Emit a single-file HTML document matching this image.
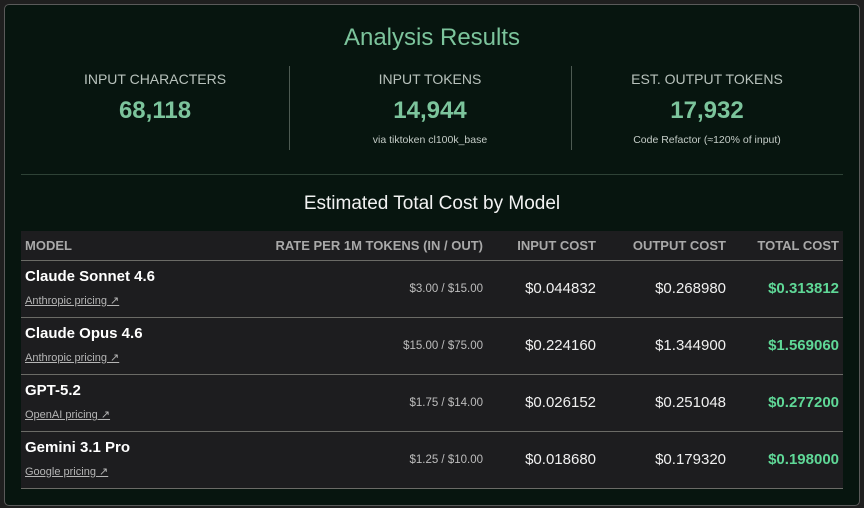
<!DOCTYPE html>
<html><head><style>
*{margin:0;padding:0;box-sizing:border-box}
body{width:864px;height:508px;background:#1f1f1f;font-family:"Liberation Sans",sans-serif;position:relative;overflow:hidden}
.card{position:absolute;left:4px;top:4px;width:856px;height:502px;background:#07150f;border:1px solid #5a5a5a;border-radius:5px}
.abs{position:absolute}
.c{text-align:center}
h1{position:absolute;left:0;width:864px;top:24px;text-align:center;font-size:24px;font-weight:normal;color:#7cc49c}
.lab{font-size:14px;color:#b8c2bc}
.num{font-size:24px;font-weight:bold;color:#7cc49c}
.sub{font-size:10.5px;color:#c4ccc7}
.vd{position:absolute;top:66px;width:1px;height:84px;background:#4d5a52}
table{position:absolute;left:21px;top:231px;width:822px;border-collapse:collapse;background:#1d1d1f;table-layout:fixed}
th{height:29px;font-size:13px;color:#a9a9a9;font-weight:bold;text-align:right;padding:0 4px;border-bottom:1px solid #6b6b66}
td{height:57px;border-bottom:1px solid #6b6b66;text-align:right;padding:0 4px;font-size:15px;color:#f0f0f0}
th:first-child,td:first-child{text-align:left}
.m{font-weight:bold;font-size:15px;color:#fff;display:block;margin-top:-2px}
.lk{font-size:11px;color:#b5b5b5;text-decoration:underline;display:block;margin-top:9px}
.r{font-size:11.5px;color:#bdbdbd}
.t{color:#5fd897;font-weight:bold}
</style></head><body>
<div class="card"></div>
<h1>Analysis Results</h1>
<div class="abs c lab" style="left:21px;width:268px;top:71px">INPUT CHARACTERS</div>
<div class="abs c num" style="left:21px;width:268px;top:97px">68,118</div>
<div class="vd" style="left:289px"></div>
<div class="abs c lab" style="left:289px;width:282px;top:71px">INPUT TOKENS</div>
<div class="abs c num" style="left:289px;width:282px;top:97px">14,944</div>
<div class="abs c sub" style="left:289px;width:282px;top:134px">via tiktoken cl100k_base</div>
<div class="vd" style="left:571px"></div>
<div class="abs c lab" style="left:571px;width:272px;top:71px">EST. OUTPUT TOKENS</div>
<div class="abs c num" style="left:571px;width:272px;top:97px">17,932</div>
<div class="abs c sub" style="left:571px;width:272px;top:134px">Code Refactor (≈120% of input)</div>
<div class="abs" style="left:21px;top:174px;width:822px;height:1px;background:#2e4236"></div>
<div class="abs c" style="left:0;width:864px;top:193px;font-size:19px;color:#f2f2f2">Estimated Total Cost by Model</div>
<table>
<colgroup><col style="width:220px"><col style="width:246px"><col style="width:113px"><col style="width:130px"><col style="width:113px"></colgroup>
<tr><th>MODEL</th><th>RATE PER 1M TOKENS (IN / OUT)</th><th>INPUT COST</th><th>OUTPUT COST</th><th>TOTAL COST</th></tr>
<tr><td><span class="m">Claude Sonnet 4.6</span><span class="lk">Anthropic pricing ↗</span></td><td class="r">$3.00 / $15.00</td><td>$0.044832</td><td>$0.268980</td><td class="t">$0.313812</td></tr>
<tr><td><span class="m">Claude Opus 4.6</span><span class="lk">Anthropic pricing ↗</span></td><td class="r">$15.00 / $75.00</td><td>$0.224160</td><td>$1.344900</td><td class="t">$1.569060</td></tr>
<tr><td><span class="m">GPT-5.2</span><span class="lk">OpenAI pricing ↗</span></td><td class="r">$1.75 / $14.00</td><td>$0.026152</td><td>$0.251048</td><td class="t">$0.277200</td></tr>
<tr><td><span class="m">Gemini 3.1 Pro</span><span class="lk">Google pricing ↗</span></td><td class="r">$1.25 / $10.00</td><td>$0.018680</td><td>$0.179320</td><td class="t">$0.198000</td></tr>
</table>
</body></html>
